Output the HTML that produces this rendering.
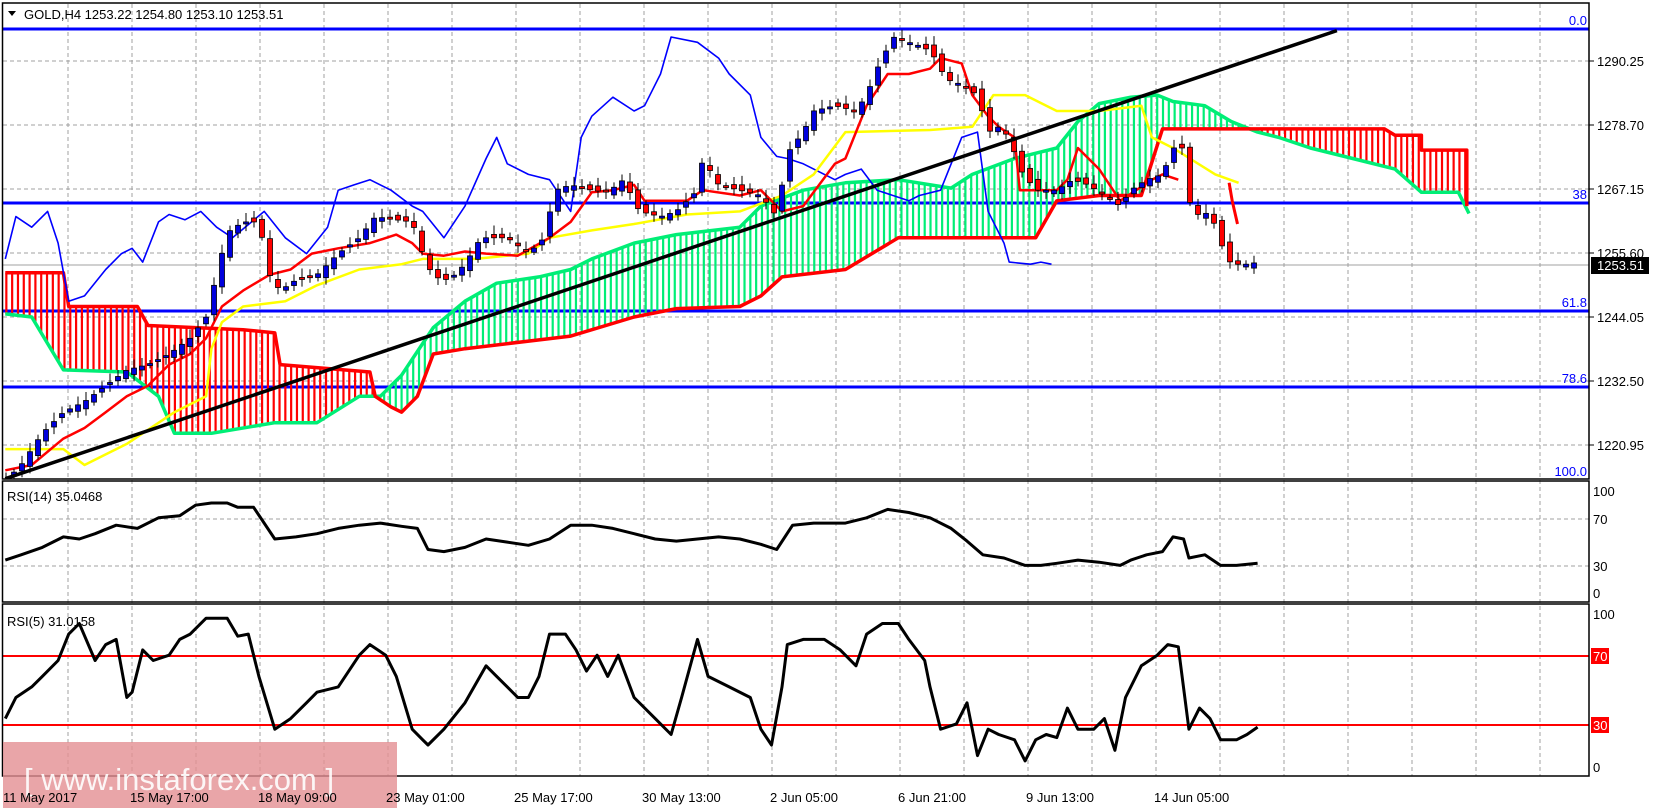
<!DOCTYPE html>
<html><head><meta charset="utf-8"><style>
html,body{margin:0;padding:0;background:#fff;width:1657px;height:811px;overflow:hidden}
svg text{font-family:"Liberation Sans",sans-serif;font-size:13px}
</style></head><body>
<svg id="s" width="1657" height="811" xmlns="http://www.w3.org/2000/svg">
<defs>
<clipPath id="cm"><rect x="3" y="4" width="1586" height="475"/></clipPath>
<clipPath id="c1"><rect x="3" y="482" width="1586" height="120"/></clipPath>
<clipPath id="c2"><rect x="3" y="605" width="1586" height="171"/></clipPath>
</defs>
<g id="grid" stroke="#a0a0a0" stroke-dasharray="4,3" stroke-width="1"></g>
<g stroke="#0000ff" stroke-width="3">
<line x1="3" y1="29" x2="1589" y2="29"/>
<line x1="3" y1="203" x2="1589" y2="203"/>
<line x1="3" y1="311" x2="1589" y2="311"/>
<line x1="3" y1="387" x2="1589" y2="387"/>
</g>
<line x1="3" y1="265" x2="1589" y2="265" stroke="#a0a0a0" stroke-width="1"/>
<g fill="#0000ff" text-anchor="end">
<text x="1587" y="25">0.0</text><text x="1587" y="199">38</text>
<text x="1587" y="307">61.8</text><text x="1587" y="383">78.6</text>
<text x="1587" y="476">100.0</text></g>
<g id="cloud" clip-path="url(#cm)"></g>
<g id="main" clip-path="url(#cm)"></g>
<g id="r1" clip-path="url(#c1)"></g>
<g stroke="#ff0000" stroke-width="2"><line x1="3" y1="656" x2="1589" y2="656"/><line x1="3" y1="725" x2="1589" y2="725"/></g>
<g id="r2" clip-path="url(#c2)"></g>
<g fill="none" stroke="#000" stroke-width="1.5">
<rect x="2.5" y="3" width="1586.5" height="476"/>
<rect x="2.5" y="481" width="1586.5" height="121"/>
<rect x="2.5" y="604" width="1586.5" height="172"/>
</g>
<g id="ticks" stroke="#000" stroke-width="1"></g>
<g fill="#000">
<text x="1597" y="66">1290.25</text><text x="1597" y="130">1278.70</text>
<text x="1597" y="194">1267.15</text><text x="1597" y="258">1255.60</text>
<text x="1597" y="322">1244.05</text><text x="1597" y="386">1232.50</text>
<text x="1597" y="450">1220.95</text>
<text x="1593" y="496">100</text><text x="1593" y="524">70</text><text x="1593" y="571">30</text><text x="1593" y="598">0</text>
<text x="1593" y="619">100</text><text x="1593" y="772">0</text>
</g>
<rect x="1591" y="257" width="58" height="17" fill="#000"/>
<text x="1597" y="270" fill="#fff">1253.51</text>
<rect x="1591" y="648" width="18" height="16" fill="#ff0000"/><text x="1593" y="661" fill="#fff">70</text>
<rect x="1591" y="717" width="18" height="16" fill="#ff0000"/><text x="1593" y="730" fill="#fff">30</text>
<path d="M8 11 L16 11 L12 16 Z" fill="#000"/>
<text x="24" y="19">GOLD,H4  1253.22 1254.80 1253.10 1253.51</text>
<text x="7" y="501">RSI(14) 35.0468</text>
<text x="7" y="626">RSI(5) 31.0158</text>
<rect x="3" y="742" width="394" height="66" fill="#e48f92" opacity="0.8"/>
<text x="24" y="790" fill="#fff" style="font-size:31px" opacity="0.9">[  www.instaforex.com ]</text>
<g fill="#000" id="dates"></g>
</svg>
<script>
(function(){
var NS="http://www.w3.org/2000/svg",K=1.0568;
function el(p,t,a){var e=document.createElementNS(NS,t);for(var k in a)e.setAttribute(k,a[k]);p.appendChild(e);return e;}
var G=document.getElementById('grid');
for(var x=68;x<1589;x+=64)el(G,'line',{x1:x,y1:4,x2:x,y2:776});
[61,125,189,253,317,381,445,519,566].forEach(function(y){el(G,'line',{x1:3,y1:y,x2:1589,y2:y});});
var T=document.getElementById('ticks');
[61,125,189,253,317,381,445].forEach(function(y){el(T,'line',{x1:1589,y1:y,x2:1594,y2:y});});
var D=document.getElementById('dates');
["11 May 2017","15 May 17:00","18 May 09:00","23 May 01:00","25 May 17:00","30 May 13:00","2 Jun 05:00","6 Jun 21:00","9 Jun 13:00","14 Jun 05:00"].forEach(function(s,i){var t=el(D,'text',{x:(i==0?3:130+128*(i-1)),y:802});t.textContent=s;});
function sc(a){return a.map(function(p){return (p[0]*K).toFixed(1)+','+(p[1]*K).toFixed(1)}).join(' ');}
function interp(a,x){for(var i=1;i<a.length;i++){if(x<=a[i][0]){var p=a[i-1],q=a[i];var t=(q[0]==p[0])?1:(x-p[0])/(q[0]-p[0]);return p[1]+t*(q[1]-p[1]);}}return a[a.length-1][1];}
function pl(g,a,c,w){el(g,'polyline',{points:sc(a),fill:'none',stroke:c,'stroke-width':w,'stroke-linejoin':'round'});}
var A=[[5,297],[30,300],[60,350],[120,352],[150,375],[165,410],[200,410],[260,400],[300,400],[340,375],[360,375],[380,355],[410,310],[440,285],[470,268],[510,262],[540,255],[560,245],[600,230],[640,222],[700,215],[720,195],[760,180],[800,173],[850,170],[900,178],[920,165],[960,150],[1000,140],[1020,115],[1040,98],[1070,92],[1095,90],[1110,96],[1140,100],[1165,115],[1190,125],[1210,130],[1240,140],[1280,150],[1320,160],[1345,182],[1380,182],[1390,202]];
var B=[[5,258],[60,258],[65,290],[130,290],[140,308],[230,312],[260,315],[265,345],[350,352],[355,375],[370,385],[380,390],[395,375],[410,335],[440,330],[540,318],[600,300],[640,292],[700,290],[720,280],[740,262],[800,255],[850,225],[980,225],[1000,190],[1040,185],[1080,185],[1100,122],[1310,122],[1320,128],[1345,128],[1345,142],[1388,142],[1388,195]];
var C=document.getElementById('cloud');
for(var x=6;x<1388;x+=5.5){var a=interp(A,x),b=interp(B,x);el(C,'line',{x1:x*K,y1:a*K,x2:x*K,y2:b*K,stroke:(b<a?'#ff0000':'#00ee76'),'stroke-width':2.2});}
pl(C,A,'#00ee76',3.5);pl(C,B,'#ff0000',3.5);
var M=document.getElementById('main');
var CH=[[5,245],[15,205],[30,215],[45,200],[55,230],[65,285],[80,280],[100,255],[115,240],[125,235],[135,248],[150,210],[160,203],[175,208],[190,200],[205,215],[220,225],[250,200],[270,225],[290,240],[310,215],[320,180],[335,175],[350,170],[370,180],[390,195],[400,200],[420,225],[440,195],[460,150],[470,130],[480,155],[500,165],[520,170],[540,200],[550,130],[560,110],[580,92],[600,105],[610,100],[625,70],[635,35],[660,40],[680,55],[690,70],[710,90],[720,130],[735,148],[745,150],[760,155],[790,170],[800,165],[815,160],[830,180],[860,190],[870,185],[890,180],[910,130],[925,125],[935,200],[950,230],[955,248],[975,250],[985,248],[995,250]];
pl(M,CH,'#0000ff',1.6);
var KJ=[[5,425],[60,425],[80,440],[100,430],[120,420],[135,410],[165,390],[195,375],[200,330],[210,305],[230,290],[270,285],[300,270],[340,255],[380,250],[400,245],[450,245],[500,240],[520,225],[560,218],[600,212],[650,203],[700,200],[740,185],[770,165],[800,125],[880,123],[920,120],[940,90],[970,90],[1000,105],[1040,105],[1080,100],[1090,130],[1110,140],[1150,165],[1172,173]];
pl(M,KJ,'#ffff00',2.5);
var TK=[[5,445],[30,440],[60,415],[80,405],[100,390],[120,375],[140,365],[160,345],[180,335],[195,320],[210,290],[230,275],[255,260],[275,255],[295,240],[320,235],[350,230],[375,222],[390,230],[400,240],[420,242],[440,238],[460,240],[490,242],[520,225],[540,210],[560,182],[580,180],[600,175],[610,190],[650,190],[665,180],[700,185],[720,180],[740,200],[760,195],[790,155],[800,150],[820,100],[840,70],[860,70],[880,65],[890,55],[910,60],[920,90],[935,110],[945,120],[960,130],[965,180],[1000,180],[1010,170],[1020,140],[1040,160],[1060,190],[1090,170],[1100,165],[1115,170]];
pl(M,TK,'#ff0000',2.5);
pl(M,[[1163,173],[1166,190],[1171,212]],'#ff0000',3);
var CL=[[5,455],[20,440],[40,410],[60,390],[80,380],[100,365],[120,350],[140,345],[160,335],[180,320],[195,300],[205,260],[215,220],[230,210],[245,210],[255,260],[265,275],[280,265],[300,260],[320,240],[340,225],[355,205],[375,208],[390,210],[400,240],[410,262],[425,265],[440,250],[455,225],[480,225],[500,240],[515,225],[525,180],[540,175],[560,180],[575,182],[590,170],[605,200],[625,205],[640,200],[660,180],[665,150],[680,175],[700,180],[720,185],[735,205],[745,145],[760,125],[770,105],[790,100],[810,105],[820,90],[830,65],[845,35],[860,40],[875,45],[885,55],[895,75],[910,80],[925,90],[935,125],[945,120],[955,130],[965,160],[980,180],[1000,180],[1015,170],[1030,175],[1045,185],[1060,195],[1070,180],[1085,170],[1100,165],[1110,140],[1120,140],[1125,190],[1135,205],[1145,200],[1155,230],[1165,250],[1180,250],[1191,248]];
var prev=interp(CL,0)*K;
for(var x=6;x<=1259;x+=8){var c=interp(CL,x/K)*K,o=prev+Math.sin(x*1.7)*4;var ty=Math.min(o,c),by=Math.max(o,c);if(by-ty<2)by=ty+2;
var hw=3+Math.abs(Math.sin(x*0.9))*6;
el(M,'line',{x1:x,y1:ty-hw,x2:x,y2:by+hw*0.8,stroke:'#000','stroke-width':1});
el(M,'rect',{x:x-2.5,y:ty,width:5,height:by-ty,fill:(c<o?'#0000dd':'#ff0000'),stroke:'#000','stroke-width':0.8});prev=c;}
pl(M,[[5,453],[1265,29]],'#000',3.5);
var R1=[[5,530],[20,525],[40,518],[60,508],[75,510],[90,505],[110,497],[130,500],[150,490],[170,488],[185,478],[200,476],[215,476],[225,480],[240,480],[260,510],[280,508],[300,505],[320,500],[340,497],[360,495],[380,498],[395,500],[405,520],[420,522],[440,518],[460,510],[480,513],[500,516],[520,510],[540,497],[560,497],[580,500],[600,505],[620,510],[640,512],[660,510],[680,508],[700,510],[720,515],[735,520],[750,497],[770,495],[800,495],[820,490],[840,482],[860,485],[880,490],[900,500],[915,512],[930,525],[950,528],[970,535],[985,535],[1000,533],[1020,530],[1040,532],[1060,535],[1070,530],[1085,525],[1100,522],[1110,508],[1120,510],[1125,528],[1140,525],[1155,535],[1170,535],[1190,533]];
pl(document.getElementById('r1'),R1,'#000',3);
var R2=[[5,680],[15,660],[30,650],[40,640],[55,625],[65,600],[75,590],[90,625],[100,610],[110,605],[120,660],[125,655],[135,615],[145,625],[160,620],[170,605],[180,600],[195,585],[215,585],[225,602],[235,600],[245,640],[260,690],[275,680],[290,665],[300,655],[320,650],[340,620],[350,610],[365,620],[375,640],[390,690],[400,700],[405,705],[420,690],[440,665],[460,630],[470,640],[480,650],[490,660],[500,660],[510,640],[520,600],[535,600],[545,615],[555,635],[565,620],[575,640],[585,620],[600,660],[620,680],[635,695],[645,660],[660,605],[670,640],[690,650],[710,660],[720,690],[730,705],[740,650],[745,610],[760,605],[780,605],[795,615],[810,630],[820,600],[835,590],[850,590],[860,605],[875,625],[880,650],[890,690],[905,685],[915,665],[925,715],[935,690],[945,695],[960,700],[970,720],[980,700],[990,695],[1000,698],[1010,670],[1020,690],[1035,690],[1045,680],[1055,710],[1065,660],[1080,630],[1095,620],[1105,610],[1115,612],[1125,690],[1135,670],[1145,680],[1155,700],[1170,700],[1180,695],[1190,688]];
pl(document.getElementById('r2'),R2,'#000',3);
})();
</script>
</body></html>
